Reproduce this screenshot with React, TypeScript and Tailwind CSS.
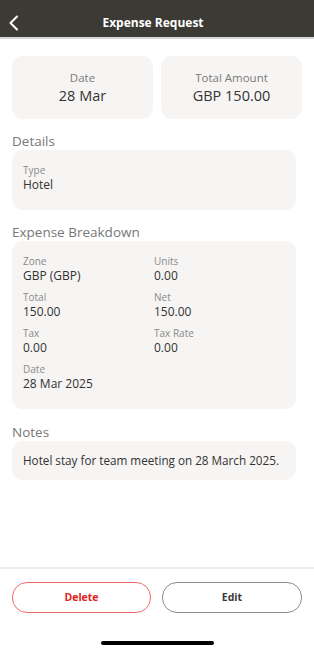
import React from "react";

const Field = ({ label, value }: { label: string; value: string }) => (
  <div className="flex flex-col">
    <span className="text-[10px] leading-[14px] text-[#8a8a8a]">{label}</span>
    <span className="text-[12px] leading-[16px] text-[#333333]">{value}</span>
  </div>
);

export default function App() {
  return (
    <div
      className="w-[314px] h-[656px] bg-white flex flex-col overflow-hidden"
      style={{ fontFamily: '"Open Sans", "Noto Sans", sans-serif' }}
    >
      <header className="h-[37px] bg-[#3b3a35] flex items-center relative shrink-0 pt-[9px]">
        <svg
          className="absolute left-[7px] top-[15px]"
          width="14"
          height="16"
          viewBox="0 0 14 16"
          fill="none"
        >
          <path d="M10 1.5 L3.5 8 L10 14.5" stroke="white" strokeWidth="2" strokeLinecap="round" strokeLinejoin="round" />
        </svg>
        <h1 className="flex-1 text-center text-white text-[12px] font-bold leading-none pr-[8px]">
          Expense Request
        </h1>
      </header>
      <div className="h-[2px] bg-[#d6d6d4] shrink-0" />

      <main className="flex-1 flex flex-col px-[12px] pt-[17px]">
        <div className="grid grid-cols-2 gap-[8px]">
          <div className="bg-[#f6f5f3] rounded-[11px] pt-[14px] pb-[13px] flex flex-col items-center">
            <span className="text-[11.5px] leading-[16px] text-[#7a7a7a]">Date</span>
            <span className="text-[14.5px] leading-[20px] text-[#333333]">28 Mar</span>
          </div>
          <div className="bg-[#f6f5f3] rounded-[11px] pt-[14px] pb-[13px] flex flex-col items-center">
            <span className="text-[11.5px] leading-[16px] text-[#7a7a7a]">Total Amount</span>
            <span className="text-[14.5px] leading-[20px] text-[#333333]">GBP 150.00</span>
          </div>
        </div>

        <div className="mr-[6px]">
          <h2 className="mt-[13px] text-[13.5px] leading-[18px] text-[#777777] font-normal">Details</h2>
          <div className="bg-[#f6f5f3] rounded-[11px] px-[11px] pt-[13px] pb-[17px]">
            <Field label="Type" value="Hotel" />
          </div>

          <h2 className="mt-[13px] text-[13.5px] leading-[18px] text-[#777777] font-normal">Expense Breakdown</h2>
          <div className="bg-[#f6f5f3] rounded-[11px] px-[11px] pt-[13px] pb-[17px] grid grid-cols-2 gap-y-[6px]">
            <Field label="Zone" value="GBP (GBP)" />
            <Field label="Units" value="0.00" />
            <Field label="Total" value="150.00" />
            <Field label="Net" value="150.00" />
            <Field label="Tax" value="0.00" />
            <Field label="Tax Rate" value="0.00" />
            <Field label="Date" value="28 Mar 2025" />
          </div>

          <h2 className="mt-[14px] text-[13.5px] leading-[18px] text-[#777777] font-normal">Notes</h2>
          <div className="bg-[#f6f5f3] rounded-[11px] px-[11px] py-[11px]">
            <p className="text-[11.7px] leading-[17px] text-[#333333] whitespace-nowrap">
              Hotel stay for team meeting on 28 March 2025.
            </p>
          </div>
        </div>
      </main>

      <footer className="h-[89px] shrink-0 border-t-2 border-[#eeeeee] flex flex-col px-[12px] pt-[13px]">
        <div className="flex gap-[11px]">
          <button className="w-[139px] h-[31px] rounded-[15px] border border-[#ef6a6a] text-[#e02424] text-[10.5px] font-bold">
            Delete
          </button>
          <button className="w-[140px] h-[31px] rounded-[15px] border border-[#8c8c8c] text-[#3a3a3a] text-[10.5px] font-bold">
            Edit
          </button>
        </div>
        <div className="mt-[28px] mx-auto w-[113px] h-[4px] rounded-full bg-black" />
      </footer>
    </div>
  );
}
